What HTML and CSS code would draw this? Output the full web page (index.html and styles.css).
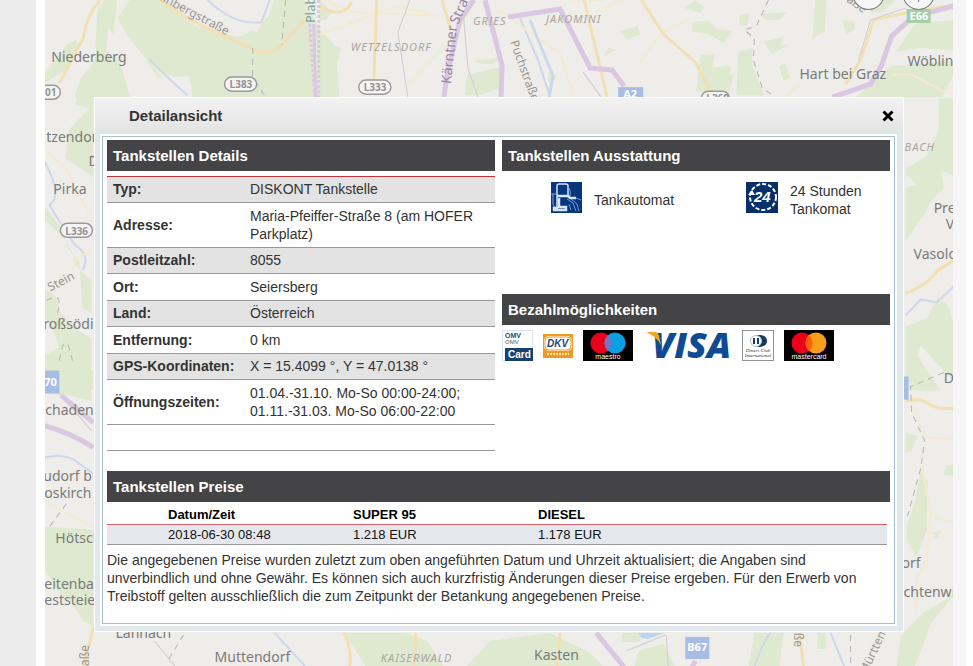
FILE: index.html
```html
<!DOCTYPE html>
<html lang="de">
<head>
<meta charset="utf-8">
<title>Detailansicht</title>
<link rel="stylesheet" href="styles.css">
</head>
<body>
<main class="page">
<div class="map">
<svg class="map-canvas" viewBox="45 0 908 666" preserveAspectRatio="xMidYMin slice" aria-hidden="true">
  <rect x="45" width="908" height="666" fill="#eeedea"/>
  <!-- woods -->
  <g fill="#dfe9d0">
    <path d="M105 0L118 0L113 42L106 50L127 70L137 89L145 97H75L82 77Q100 60 96 45L98 10Z"/>
    <path d="M130 0H168L195 25L238 37L250 32L270 15L274 0H305L320 30L335 45L340 98H192L190 76L158 78L146 58L128 36L118 18Z"/>
    <path d="M45 74L68 44L77 40L79 46L72 57L67 70L45 83Z"/>
    <path d="M78 95L94 93V177L66 158L69 130L90 108L76 104Z"/>
    <path d="M45 205L60 225L75 264L92 280V313L83 307L80 262L62 235L45 220Z"/>
    <path d="M45 290Q59 292 60 310L76 328L92 338V400L45 390V355L60 347L52 325L45 318Z"/>
    <path d="M80 370H94V390L80 378Z"/>
    <path d="M45 526L94 529V625L84 620L73 603L60 592L45 568Z"/>
    <path d="M320 0L332 12L326 20H320ZM320 40L341 48L334 80L324 97H320Z"/>
    <path d="M477 60L500 58L494 64L475 63ZM620 31L637 26L640 34L627 40ZM548 72L557 76L549 85ZM608 48L617 50L604 56ZM467 75L500 67V88L480 95H465Z"/>
    <path d="M684 8L695 0L704 7L700 13ZM692 22L708 21L716 29L732 31L724 43L708 34L692 32ZM739 15L749 13L747 26H739ZM763 42L783 37L780 46L788 44L772 54ZM779 66L785 63L790 78L783 81ZM842 20L854 22L854 30L846 34ZM815 0H826L824 32L812 38ZM700 55L714 54L712 68L730 65V78L710 92H696ZM738 51L752 49L752 66L764 95H736ZM715 80L733 74L728 97L709 97Z"/>
    <path d="M760 14L786 12L779 20H765ZM870 0H895L883 12H870ZM914 24L953 20V50L920 48L895 52ZM890 66L953 61V74L942 97H855Z"/>
    <path d="M938 98H953V175L941 171L943 188L931 200L924 214L905 240V187L916 184L905 174V168L926 156L938 130Z"/>
    <path d="M905 326L926 318L937 297L948 305L953 325V380L939 366L920 345L917 355L940 390H905Z"/>
    <path d="M905 432L917 435L911 450L905 452ZM920 470L927 480L926 530L916 556L906 540V525L914 502ZM945 465L953 464V475L943 474ZM931 532L941 529L936 538ZM953 594L930 623L921 648L914 666H896L900 635L922 612Z"/>
    <path d="M345 632H406L427 640L444 666H366ZM466 666L490 640L550 632L590 652L603 666ZM622 632H640V641H621ZM638 650L663 643L675 666H634ZM754 632H783L779 666H748ZM817 632H825V648H817Z"/>
  </g>
  <g fill="#eeedea">
    <path d="M109 28L119 40L146 74L152 97H131L120 60L107 46Z"/>
    <path d="M205 0H268L258 32Q225 28 205 8Z"/>
    <path d="M160 72L191 81L193 97H178L150 62Z"/>
    <path d="M60 240L75 255L72 268L61 258Z"/>
  </g>
  <!-- streams -->
  <g fill="none" stroke="#cdd8ec" stroke-width="2">
    <path d="M208 0Q235 26 262 22L270 0M150 59Q170 80 188 95M45 161Q64 195 50 205L75 244Q92 255 83 270M45 457Q68 452 80 463L94 473M520 18L538 60L550 97M275 632L306 666M905 315L920 299L936 302L953 286M830 632L844 666M754 666Q762 642 770 632"/>
  </g>
  <!-- minor roads -->
  <g fill="none" stroke="#f3ebcf" stroke-width="2">
    <path d="M320 35L395 6L430 14M325 0L352 12L440 16M405 88L450 40L470 12M498 10L560 53L574 97M570 0L602 0M595 12L622 0M640 62L662 32L690 18M45 150L67 168L90 215M92 250L76 259L73 270M45 500L70 514L94 526M905 397H917L932 407H953M912 400L922 432L928 437L953 438M921 465L930 510L926 560L917 575L915 610M927 508L940 520H953M785 97L800 83M891 75L910 74L942 91L953 86"/>
  </g>
  <!-- primary roads -->
  <g fill="none" stroke="#f3dfb4" stroke-width="3">
    <path d="M101 0Q87 15 84 38L60 83M160 0Q195 25 245 45Q270 60 283 44L305 20M320 6Q343 20 352 2M377 0L374 80M442 0L451 30M584 0L607 97M641 0L664 35L695 62L711 92M953 5L900 14L873 20L860 60L845 84M94 626L84 666M905 293Q928 284 937 270L953 260M905 400L920 399L938 408L953 408M344 632Q352 646 350 666M560 632L557 666M799 632L803 666M416 632L414 666"/>
  </g>
  <!-- railways -->
  <g fill="none" stroke="#cfccd3" stroke-width="1">
    <path d="M410 0L398 32L408 97M463 10L468 68L478 97M583 72L601 97M858 60L870 20L905 8M45 375L92 430M155 640L176 666M666 634L668 666M626 650L665 634"/>
  </g>
  <!-- boundaries -->
  <g fill="none" stroke="#b5b3b5" stroke-width="1" stroke-dasharray="6 5">
    <path d="M286 0L282 45M253 48V76L266 97M768 0L756 26L744 30L754 38L753 60L762 88L772 95M47 300Q65 290 58 313M60 360Q66 325 73 360M67 503L48 529M943 372L910 386L911 412L924 440L920 468L907 515M184 634L168 660M850 634V666"/>
  </g>
  <!-- motorways -->
  <g fill="none" stroke="#dac7e1" stroke-width="5">
    <path d="M485 0L502 65L501 97M508 17L560 9L590 68L612 70L624 86M444 97L447 75L460 20L474 0M832 97L870 84L881 65L891 36L912 17L953 6M45 425Q72 432 94 447M62 395L94 422M596 632L624 666M695 660L692 666"/>
    <path d="M310 24L315 97M319 0V97" stroke-width="3" stroke-dasharray="3 2"/>
    <path d="M314 24L316 97" stroke-width="3"/>
  </g>
  <!-- water -->
  <path d="M638 632H664L648 638L641 637Z" fill="#bdd3f2"/>
  <path d="M530 20L553 76L549 97" fill="none" stroke="#cdd8ec" stroke-width="3"/>
  <!-- road shields -->
  <g class="shield">
    <g fill="#f6f5f3" stroke="#9a9a9a" stroke-width="1.5">
      <rect x="225" y="77" width="32" height="14" rx="7"/><rect x="359" y="80" width="32" height="14" rx="7"/>
      <rect x="25" y="85" width="36" height="14" rx="7"/><rect x="61" y="223" width="32" height="14" rx="7"/>
      <rect x="701" y="91" width="28" height="14" rx="7"/>
    </g>
    <text x="230" y="88">L383</text><text x="364" y="91">L333</text><text x="40" y="96">301</text><text x="66" y="235">L336</text><text x="706" y="102">L369</text>
    <g fill="#a7bde4"><rect x="618" y="87" width="25" height="15"/><rect x="40" y="370" width="20" height="23"/><rect x="685" y="636" width="24" height="22"/><rect x="899" y="376" width="9" height="23"/></g>
    <rect x="906" y="9" width="24" height="14" fill="#a7cda9"/>
    <g class="shield-light"><text x="623" y="98">A2</text><text x="45" y="385">70</text><text x="687" y="650">B67</text><text x="909" y="20">E66</text></g>
  </g>
  <!-- places -->
  <g class="place">
    <text x="52" y="62">Niederberg</text><text x="799" y="79">Hart bei Graz</text><text x="907" y="66">Wöblin</text>
    <text x="47" y="142">tzendorf</text><text x="89" y="166">D</text><text x="54" y="194">Pirka</text><text x="44" y="329">roßsödi</text>
    <text x="46" y="414">chaden</text><text x="44" y="480">udorf b</text><text x="45" y="497">oskirch</text><text x="56" y="542">Hötsch</text>
    <text x="45" y="588">eitenba</text><text x="45" y="604">eststeie</text><text x="116" y="637">Lannach</text><text x="215" y="661">Muttendorf</text>
    <text x="534" y="659">Kasten</text><text x="933" y="213">Pre</text><text x="945" y="229">V</text><text x="913" y="259">Vasold</text>
    <text x="943" y="382">D</text><text x="901" y="567">orf</text><text x="903" y="596">chtenwi</text>
  </g>
  <g class="district">
    <text x="351" y="51">WETZELSDORF</text><text x="473" y="25">GRIES</text><text x="546" y="23">JAKOMINI</text>
    <text x="904" y="151">BACH</text><text x="381" y="661">KAISERWALD</text>
  </g>
  <g class="street">
    <text transform="translate(153 -4) rotate(28)">teinbergstraße</text>
    <text transform="translate(510 42) rotate(70)">Puchstraße</text>
    <text transform="translate(51 291) rotate(-27)">Stein</text>
    <text transform="translate(90 674) rotate(-90)">traße</text>
    <text transform="translate(794 616) rotate(90)">traße</text>
    <text transform="translate(866 674) rotate(-65)">Mürttend</text>
    <text transform="translate(838 -4) rotate(35)">traße</text>
    <text class="street-big" transform="translate(451 84) rotate(-84)">Kärntner</text>
    <text class="street-big" transform="translate(458 25) rotate(-66)">Straße</text>
    <text class="street-green" transform="translate(315 23) rotate(-90)">Plabutsch</text>
  </g>
  <!-- map controls -->
  <g fill="#f6f6f5" stroke="#7d7d7d"><circle cx="868" cy="-6" r="15.500"/><circle cx="918" cy="-6" r="15.500"/><path d="M918 -8V2"/></g>
</svg>

<section class="dialog" role="dialog" aria-labelledby="dialog-title">
  <header class="dialog-head">
    <h1 id="dialog-title">Detailansicht</h1>
    <button class="close" type="button" aria-label="Schließen"><svg width="12" height="12" viewBox="0 0 12 12"><path d="M1.500 1.500L10.500 10.500M10.500 1.500L1.500 10.500" stroke="#000" stroke-width="3"/></svg></button>
  </header>
  <div class="dialog-frame">
  <div class="dialog-body">
    <div class="columns">
      <section>
        <h2>Tankstellen Details</h2>
        <table class="details">
          <tr><th scope="row">Typ:</th><td>DISKONT Tankstelle</td></tr>
          <tr><th scope="row">Adresse:</th><td>Maria-Pfeiffer-Straße 8 (am HOFER<br>Parkplatz)</td></tr>
          <tr><th scope="row">Postleitzahl:</th><td>8055</td></tr>
          <tr><th scope="row">Ort:</th><td>Seiersberg</td></tr>
          <tr><th scope="row">Land:</th><td>Österreich</td></tr>
          <tr><th scope="row">Entfernung:</th><td>0 km</td></tr>
          <tr><th scope="row">GPS-Koordinaten:</th><td>X = 15.4099 °, Y = 47.0138 °</td></tr>
          <tr><th scope="row">Öffnungszeiten:</th><td>01.04.-31.10. Mo-So 00:00-24:00;<br>01.11.-31.03. Mo-So 06:00-22:00</td></tr>
          <tr class="spacer"><td colspan="2"></td></tr>
        </table>
      </section>
      <div class="side">
        <section class="equipment">
          <h2>Tankstellen Ausstattung</h2>
          <ul class="features">
            <li>
              <svg width="31" height="31" viewBox="0 0 31 31" aria-hidden="true">
                <rect width="31" height="31" fill="#07367e"/>
                <g fill="none" stroke="#d5e5f5" stroke-width="1.500">
                  <path d="M6 25V4Q6 2 8 2H15Q17 2 17 4V13"/>
                  <path d="M0 12H5M2 12V22L4 26M17 5Q20 7 19 14" stroke="#7fa9d8" stroke-width="1"/>
                  <path d="M6 14H17L19 16H25" stroke-width="2.500"/>
                  <path d="M8 16V25H15V28H3V26H7" stroke-width="2.500"/>
                  <path d="M16 17L22 21L25 29M20 17L26 22L28 29M25 16L30 18M18 22L20 28" stroke="#6b9bd0" stroke-width="1"/>
                </g>
              </svg>
              <span>Tankautomat</span>
            </li>
            <li>
              <svg width="32" height="31" viewBox="0 0 32 31" aria-hidden="true">
                <rect width="32" height="31" fill="#07306b"/>
                <ellipse cx="17" cy="15" rx="13" ry="13" fill="none" stroke="#fff" stroke-width="2" stroke-dasharray="4 2"/>
                <path d="M2 13L6 8L9 13Z" fill="#fff"/>
                <text x="8" y="20" class="icon-24">24</text>
              </svg>
              <span>24 Stunden Tankomat</span>
            </li>
          </ul>
        </section>
        <section>
          <h2>Bezahlmöglichkeiten</h2>
          <div class="payments">
            <svg width="31" height="31" viewBox="0 0 31 31" role="img" aria-label="OMV Card">
              <rect x=".5" y=".5" width="30" height="30" fill="#fff" stroke="#dce4ed"/>
              <text x="3" y="8" class="card-mark">OMV</text><text x="3" y="14" class="card-omv">OMV</text>
              <rect x="3" y="18" width="28" height="13" fill="#164271"/><text x="6" y="28" class="card-word">Card</text>
            </svg>
            <svg class="dkv" width="30" height="24" viewBox="0 0 30 24" role="img" aria-label="DKV">
              <rect width="30" height="24" fill="#f29a20"/><rect x="1" y="2" width="28" height="15" rx="5" fill="#fff"/>
              <rect x="2" y="3" width="26" height="13" rx="4" fill="none" stroke="#f29a20"/>
              <text x="4" y="13" class="dkv-word">DKV</text><path d="M4 20H26" stroke="#ffe2b2" stroke-width="2" stroke-dasharray="2 1"/>
            </svg>
            <svg width="50" height="31" viewBox="0 0 50 31" role="img" aria-label="maestro">
              <rect width="50" height="31"/><circle cx="18" cy="13" r="10.500" fill="#eb001b"/><circle cx="32" cy="13" r="10.500" fill="#0a9fe0"/>
              <path d="M25 5.200A10.500 10.500 0 0 1 25 20.800A10.500 10.500 0 0 1 25 5.200" fill="#7673c0"/><text x="25" y="29" class="brand">maestro</text>
            </svg>
            <svg class="visa" width="84" height="31" viewBox="0 0 84 31" role="img" aria-label="VISA">
              <text x="6" y="28" class="visa-word">VISA</text>
              <path d="M0 2H9Q12 2 13 6L15 15Q10 6 0 2Z" fill="#f2a51e"/>
            </svg>
            <svg width="32" height="31" viewBox="0 0 32 31" role="img" aria-label="Diners Club International">
              <rect x=".5" y=".5" width="31" height="30" fill="#fff" stroke="#8f9497"/>
              <path d="M14 5H19Q25 6 25 11Q25 16 18 17H14Z" fill="#183a64"/><circle cx="14" cy="11" r="5.500" fill="#fff" stroke="#b7c0ca"/><path d="M12 8V14M16 8V14" stroke="#183a64" stroke-width="2"/>
              <text x="16" y="22" class="diners">Diners Club</text><text x="16" y="27" class="diners">International</text>
            </svg>
            <svg width="50" height="31" viewBox="0 0 50 31" role="img" aria-label="mastercard">
              <rect width="50" height="31"/><circle cx="18" cy="13" r="10.500" fill="#eb001b"/><circle cx="32" cy="13" r="10.500" fill="#f79e1b"/>
              <path d="M25 5.200A10.500 10.500 0 0 1 25 20.800A10.500 10.500 0 0 1 25 5.200" fill="#ff5f00"/><text x="25" y="29" class="brand">mastercard</text>
            </svg>
          </div>
        </section>
      </div>
    </div>
    <section>
      <h2>Tankstellen Preise</h2>
      <table class="prices">
        <thead><tr><th scope="col">Datum/Zeit</th><th scope="col">SUPER 95</th><th scope="col">DIESEL</th></tr></thead>
        <tbody><tr><td>2018-06-30 08:48</td><td>1.218 EUR</td><td>1.178 EUR</td></tr></tbody>
      </table>
      <p>Die angegebenen Preise wurden zuletzt zum oben angeführten Datum und Uhrzeit aktualisiert; die Angaben sind unverbindlich und ohne Gewähr. Es können sich auch kurzfristig Änderungen dieser Preise ergeben. Für den Erwerb von Treibstoff gelten ausschließlich die zum Zeitpunkt der Betankung angegebenen Preise.</p>
    </section>
  </div>
  </div>
</section>
</div>
</main>
</body>
</html>
```
FILE: styles.css
```css
* { box-sizing: border-box; }

body {
  margin: 0;
  background: #fff;
  color: #333;
  font: 14px/18px "Liberation Sans", Arial, sans-serif;
}

h1, h2, p, ul { margin: 0; padding: 0; }

.page {
  min-height: 100vh;
  margin-right: 7px;
  padding-right: 13px;
  border-left: 36px solid #ececec;
  background: #f6f6f6;
}

.map {
  position: relative;
  min-height: 100vh;
  padding: 97px 49px 35px;
  border-left: 9px solid #fff;
  overflow: hidden;
}

.map-canvas {
  position: absolute;
  inset: 0;
  width: 100%;
  height: 100%;
}

.map-canvas text { font-family: "Noto Sans", sans-serif; }
.place { font-size: 14px; fill: #7b7b7b; }
.district { font-size: 11px; font-style: italic; letter-spacing: 1px; fill: #aba5a2; }
.street { font-size: 12px; fill: #9b958e; }
.street-big { font-size: 14px; fill: #9a86a4; }
.street-green { font-size: 13px; fill: #83a29b; }
.shield { font-size: 10px; font-weight: 700; fill: #939393; }
.shield-light { font-size: 11px; fill: #fff; }

/* Dialog */
.dialog {
  position: relative;
  border: 1px solid #fff;
  background: #e3e8ec;
}

.dialog-head {
  display: flex;
  align-items: center;
  justify-content: space-between;
  height: 36px;
  padding: 0 9px 0 34px;
  background: linear-gradient(#f2f2f2, #e9e9e9 60%, #e0e5e1);
}

.dialog-head h1 { font-size: 15px; line-height: 18px; }

.close {
  display: flex;
  padding: 0;
  border: 0;
  background: none;
}

.dialog-frame {
  margin: 0 6px 5px 5px;
  padding: 2px;
  background: #fff;
}

.dialog-body {
  min-height: 488px;
  padding: 3px 4px;
  border: 1px solid #a9bfcd;
  background: #fff;
}

.columns {
  display: grid;
  grid-template-columns: 1fr 1fr;
  gap: 7px;
  margin-bottom: 20px;
}

h2 {
  padding: 6px;
  background: #444446;
  color: #fff;
  font-size: 15px;
  line-height: 19px;
}

table { width: 100%; border-collapse: separate; border-spacing: 0; }
th { text-align: left; }

.details { margin-top: 5px; border-top: 1px solid #c1363c; }
.details th, .details td { padding: 4px 0 4px 6px; border-bottom: 1px solid #999; }
.details th { width: 137px; white-space: nowrap; }
.details tr:nth-child(odd) { background: #e3e3e3; }
.details tr:nth-child(odd) > * { padding-top: 3px; }
.details .spacer:nth-child(odd) { height: 26px; background: #fff; }

.equipment { min-height: 154px; }

.features {
  display: grid;
  grid-template-columns: 195px 1fr;
  padding: 11px 0 0 49px;
  list-style: none;
}

.features li { display: flex; align-items: flex-start; gap: 12px; }
.features li span { width: 90px; align-self: center; }
.icon-24 { font: italic 700 15px "Liberation Sans", sans-serif; fill: #fff; }

.payments { display: flex; align-items: center; gap: 10px; padding: 5px 0; }
.payments svg { flex: none; }
.visa { margin: 0 2px 0 3px; }
.card-mark { font: 700 7px "Liberation Sans", sans-serif; fill: #174e85; }
.card-omv { font: 6px "Liberation Sans", sans-serif; fill: #555; }
.card-word { font: 700 10px "Liberation Sans", sans-serif; fill: #fff; }
.dkv-word { font: italic 700 10px "Liberation Sans", sans-serif; fill: #1f477b; }
.brand { font: 7px "Liberation Sans", sans-serif; fill: #fff; text-anchor: middle; }
.visa-word { font: italic 800 36px "Open Sans", sans-serif; fill: #0e4b93; }
.diners { font: italic 5px "Liberation Serif", serif; fill: #333; text-anchor: middle; }

.prices { width: calc(100% - 3px); table-layout: fixed; margin-top: 3px; color: #111; font-size: 13px; line-height: 17px; }
.prices th, .prices td { padding: 1px 0; }
.prices th:first-child, .prices td:first-child { width: 246px; padding-left: 61px; }
.prices th:nth-child(2), .prices td:nth-child(2) { width: 185px; }
.prices th { border-bottom: 1px solid #d8606a; color: #000; }
.prices td { border-bottom: 1px solid #999; background: #e4e8ec; }
.prices + p { margin-top: 6px; }
```
